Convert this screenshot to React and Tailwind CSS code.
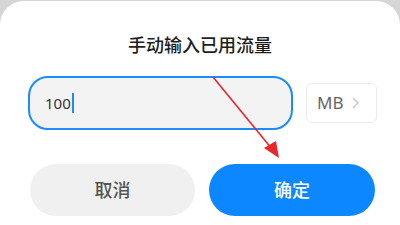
export default function App() {
  return (
    <div className="w-[400px] h-[225px] bg-[#d6d6d6] pt-px overflow-hidden relative" style={{ fontFamily: '"Noto Sans", "Noto Sans CJK SC", sans-serif' }}>
      <div className="bg-white h-[224px] rounded-t-[24px] flex flex-col">
        <div className="pt-[32px] text-center text-[18px] leading-[24px] font-medium text-[#1e1e1e]">手动输入已用流量</div>
        <div className="mt-[19px] flex items-center pl-[28px] pr-[23px] gap-[13px]">
          <div className="w-[265px] h-[54px] rounded-[20px] border-2 border-[#1a8cff] bg-[#f3f3f3] flex items-center pl-[15px]">
            <span className="text-[15px] text-[#333]">100</span>
            <span className="w-[2px] h-[20px] bg-[#1a8cff] ml-px"></span>
          </div>
          <div className="w-[71px] h-[40px] rounded-[6px] border border-[#ececec] flex items-center pl-[10px] gap-[9px]">
            <span className="text-[17px] text-[#666]">MB</span>
            <svg width="7" height="12" viewBox="0 0 7 12" fill="none"><path d="M1 1l5 5-5 5" stroke="#c4c4c4" strokeWidth="1.3" /></svg>
          </div>
        </div>
        <div className="mt-[34px] flex pl-[30px] pr-[25px] gap-[14px]">
          <button className="w-[165px] h-[52px] rounded-full bg-[#f0f0f0] text-[18px] font-medium text-[#555]">取消</button>
          <button className="w-[166px] h-[52px] rounded-full bg-[#0d87ff] text-[18px] font-medium text-white">确定</button>
        </div>
      </div>
      <svg className="absolute left-0 top-0" width="400" height="225" viewBox="0 0 400 225">
        <line x1="213" y1="77" x2="272" y2="149" stroke="#e8262b" strokeWidth="1.6" />
        <polygon points="279,158 264,148 276,141" fill="#e8262b" />
      </svg>
    </div>
  );
}
